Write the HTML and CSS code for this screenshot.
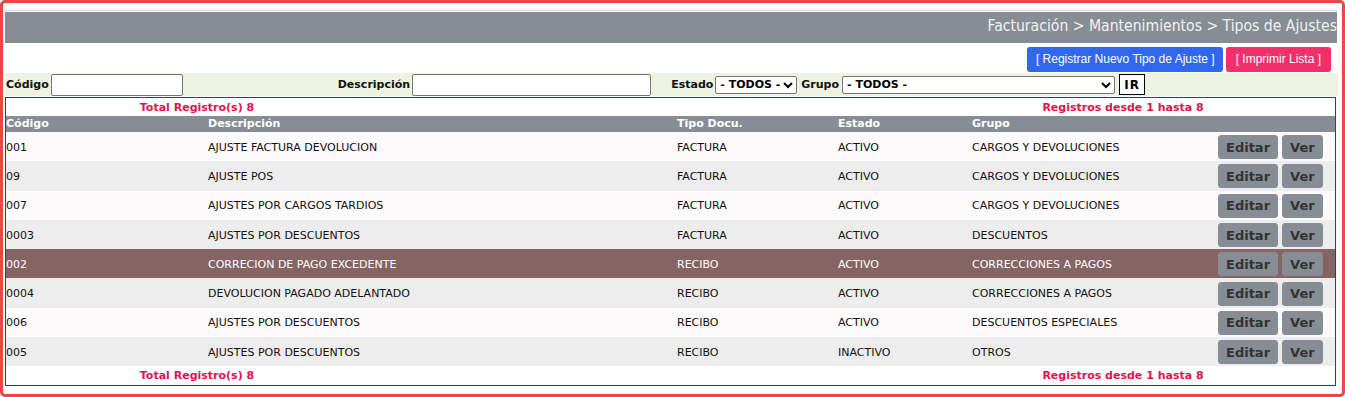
FILE: index.html
```html
<!DOCTYPE html>
<html lang="es">

<head>
    <meta charset="UTF-8">
    <title>Tipos de Ajustes</title>
    <link rel="stylesheet" href="styles.css">
</head>

<body>
    <div class="marco">
        <div class="migas">Facturación &gt; Mantenimientos &gt; Tipos de Ajustes</div>

        <div class="acciones">
            <a class="btnAccion azul">[ Registrar Nuevo Tipo de Ajuste ]</a>
            <a class="btnAccion rosa">[ Imprimir Lista ]</a>
        </div>

        <form class="filtros">
            <label class="lbl">Código</label>
            <input type="text" class="txtCodigo">
            <label class="lbl lblDesc">Descripción</label>
            <input type="text" class="txtDesc">
            <label class="lbl lblEstado">Estado</label>
            <select class="selEstado">
                <option>- TODOS -</option>
            </select>
            <label class="lbl">Grupo</label>
            <select class="selGrupo">
                <option>- TODOS -</option>
            </select>
            <button type="button" class="btnIr">IR</button>
        </form>

        <div class="listado">
            <div class="totales">
                <span class="totIzq">Total Registro(s) 8</span>
                <span class="totDer">Registros desde 1 hasta 8</span>
            </div>
            <table class="tabla">
                <thead>
                    <tr>
                        <th class="c1">Código</th>
                        <th class="c2">Descripción</th>
                        <th class="c3">Tipo Docu.</th>
                        <th class="c4">Estado</th>
                        <th class="c5">Grupo</th>
                        <th class="c6"></th>
                    </tr>
                </thead>
                <tbody>
                    <tr>
                        <td>001</td><td>AJUSTE FACTURA DEVOLUCION</td><td>FACTURA</td><td>ACTIVO</td><td>CARGOS Y DEVOLUCIONES</td>
                        <td class="botones"><button class="btnFila">Editar</button><button class="btnFila">Ver</button></td>
                    </tr>
                    <tr>
                        <td>09</td><td>AJUSTE POS</td><td>FACTURA</td><td>ACTIVO</td><td>CARGOS Y DEVOLUCIONES</td>
                        <td class="botones"><button class="btnFila">Editar</button><button class="btnFila">Ver</button></td>
                    </tr>
                    <tr>
                        <td>007</td><td>AJUSTES POR CARGOS TARDIOS</td><td>FACTURA</td><td>ACTIVO</td><td>CARGOS Y DEVOLUCIONES</td>
                        <td class="botones"><button class="btnFila">Editar</button><button class="btnFila">Ver</button></td>
                    </tr>
                    <tr>
                        <td>0003</td><td>AJUSTES POR DESCUENTOS</td><td>FACTURA</td><td>ACTIVO</td><td>DESCUENTOS</td>
                        <td class="botones"><button class="btnFila">Editar</button><button class="btnFila">Ver</button></td>
                    </tr>
                    <tr class="activa">
                        <td>002</td><td>CORRECION DE PAGO EXCEDENTE</td><td>RECIBO</td><td>ACTIVO</td><td>CORRECCIONES A PAGOS</td>
                        <td class="botones"><button class="btnFila">Editar</button><button class="btnFila">Ver</button></td>
                    </tr>
                    <tr>
                        <td>0004</td><td>DEVOLUCION PAGADO ADELANTADO</td><td>RECIBO</td><td>ACTIVO</td><td>CORRECCIONES A PAGOS</td>
                        <td class="botones"><button class="btnFila">Editar</button><button class="btnFila">Ver</button></td>
                    </tr>
                    <tr>
                        <td>006</td><td>AJUSTES POR DESCUENTOS</td><td>RECIBO</td><td>ACTIVO</td><td>DESCUENTOS ESPECIALES</td>
                        <td class="botones"><button class="btnFila">Editar</button><button class="btnFila">Ver</button></td>
                    </tr>
                    <tr>
                        <td>005</td><td>AJUSTES POR DESCUENTOS</td><td>RECIBO</td><td>INACTIVO</td><td>OTROS</td>
                        <td class="botones"><button class="btnFila">Editar</button><button class="btnFila">Ver</button></td>
                    </tr>
                </tbody>
            </table>
            <div class="totales pie">
                <span class="totIzq">Total Registro(s) 8</span>
                <span class="totDer">Registros desde 1 hasta 8</span>
            </div>
        </div>
    </div>
</body>

</html>
```

FILE: styles.css
```css
/* Reset */
* {
    margin: 0;
    padding: 0;
    box-sizing: border-box;
}

body {
    font-family: 'DejaVu Sans', Verdana, sans-serif;
    font-size: 11px;
    color: #111;
    background: #fff;
}

.marco {
    height: 397px;
    border: 3px solid #e84848;
    border-radius: 5px;
    padding: 7px 4px 0 2px;
}

.migas {
    border-top: 1px solid #d4d7da;
    padding-top: 1px;
    height: 33px;
    background: #878d94;
    background-clip: content-box;
    color: #f2f2f2;
    font-family: 'DejaVu Sans Condensed', 'DejaVu Sans', sans-serif;
    font-size: 15.6px;
    text-align: right;
    line-height: 29px;
    padding-right: 1px;
}

.acciones {
    display: flex;
    justify-content: flex-end;
    gap: 3px;
    padding: 4px 7px 1px 0;
}

.btnAccion {
    font-family: 'Liberation Sans', Arial, sans-serif;
    font-size: 12px;
    color: #fff;
    height: 25px;
    line-height: 25px;
    padding: 0 8px 0 9px;
    border-radius: 3px;
}

.azul {
    background: #2f68ee;
}

.rosa {
    background: #f22f68;
    padding: 0 10px;
}

.filtros {
    display: flex;
    align-items: center;
    height: 23px;
    background: #edf3e0;
    padding-left: 1px;
}

.lbl {
    font-weight: bold;
    font-size: 11px;
}

.filtros input[type="text"] {
    height: 22px;
    border: 1px solid #767676;
    border-radius: 2px;
    background: #fff;
}

.txtCodigo {
    width: 132px;
    margin-left: 2px;
}

.lblDesc {
    margin-left: 155px;
}

.txtDesc {
    width: 239px;
    margin-left: 2px;
}

.lblEstado {
    margin-left: 20px;
}

.filtros select {
    height: 18px;
    font-family: 'DejaVu Sans', Verdana, sans-serif;
    font-size: 11px;
    font-weight: bold;
    border: 1px solid #767676;
    border-radius: 2px;
    background: #fff;
    margin: 0 4px 0 2px;
}

.selEstado {
    width: 82px;
}

.selGrupo {
    width: 273px;
    margin-left: 3px !important;
}

.btnIr {
    height: 21px;
    width: 26px;
    border: 1px solid #000;
    background: #fff;
    font-family: 'DejaVu Sans', Verdana, sans-serif;
    font-size: 12px;
    font-weight: bold;
    letter-spacing: 1px;
}

.listado {
    margin-top: 1px;
    width: 1331px;
    border: 1px solid #1d4a66;
}

.totales {
    display: flex;
    height: 18px;
    align-items: center;
    color: #e0134f;
    font-weight: bold;
}

.pie {
    height: 19px;
}

.totIzq {
    width: 382px;
    text-align: center;
}

.totDer {
    margin-left: auto;
    width: 424px;
    text-align: center;
}

.tabla {
    width: 100%;
    border-collapse: collapse;
}

.tabla th {
    background: #878d94;
    color: #fff;
    text-align: left;
    font-weight: bold;
    height: 16px;
    line-height: 14px;
    padding: 0;
}

.c1 { width: 202px; }
.c2 { width: 469px; }
.c3 { width: 161px; }
.c4 { width: 134px; }
.c5 { width: 246px; }

.tabla td {
    height: 29.3px;
    padding: 0;
    vertical-align: middle;
    padding-top: 1px;
}

.tabla tbody tr:nth-child(odd) {
    background: #fcfafa;
}

.tabla tbody tr:nth-child(even) {
    background: #ededed;
}

.tabla tbody tr.activa {
    background: #866464;
    color: #fff;
}

.botones {
    white-space: nowrap;
}

.btnFila {
    height: 24px;
    padding: 0 7px;
    background: #878d94;
    color: #333;
    border: 1px solid #878d94;
    border-radius: 3px;
    font-family: 'DejaVu Sans', Verdana, sans-serif;
    font-size: 13px;
    font-weight: bold;
    margin-right: 4px;
    vertical-align: middle;
}
```
